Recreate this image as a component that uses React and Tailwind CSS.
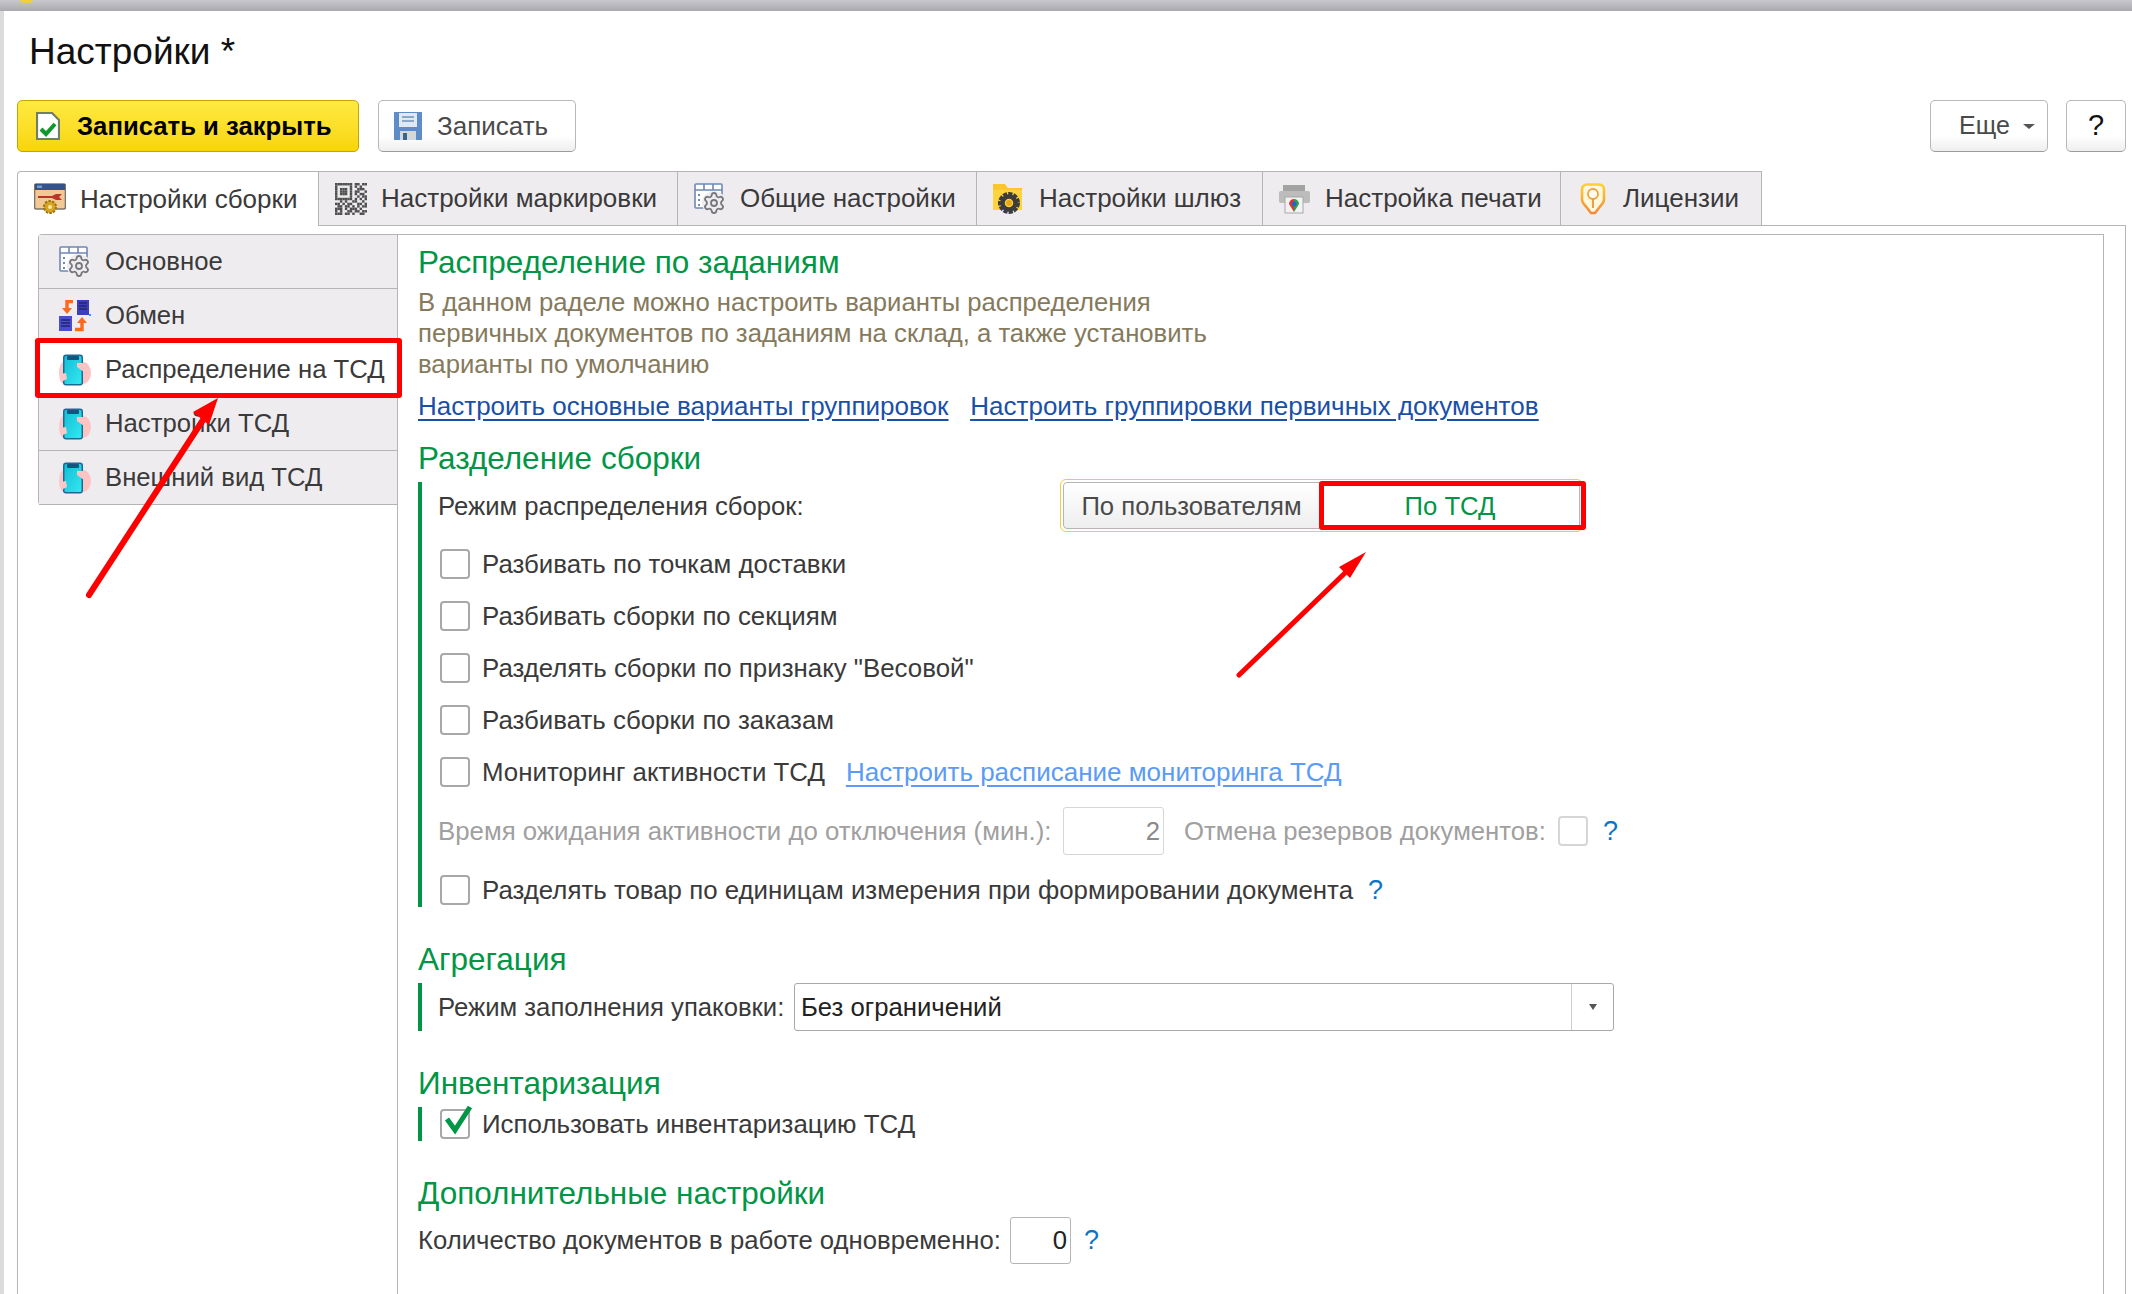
import React from 'react';
import { Settings } from 'lucide-react';

const tabs = [
  { label: 'Настройки сборки', w: 'w-[302px]', icon: 'assembly', active: true },
  { label: 'Настройки маркировки', w: 'w-[359px]', icon: 'qr' },
  { label: 'Общие настройки', w: 'w-[299px]', icon: 'common' },
  { label: 'Настройки шлюз', w: 'w-[286px]', icon: 'folder' },
  { label: 'Настройка печати', w: 'w-[298px]', icon: 'printer' },
  { label: 'Лицензии', w: 'w-[201px]', icon: 'license' },
];

const sideItems = [
  { label: 'Основное', icon: 'common' },
  { label: 'Обмен', icon: 'exchange' },
  { label: 'Распределение на ТСД', icon: 'phone', active: true },
  { label: 'Настройки ТСД', icon: 'phone' },
  { label: 'Внешний вид ТСД', icon: 'phone' },
];

const qrCells = [
  '1111111011011',
  '1000001010100',
  '1011101001110',
  '1011101011001',
  '1011101010110',
  '1000001001011',
  '1111111010101',
  '0010100110010',
  '1101011001101',
  '0110110101011',
  '1110101110100',
  '1010011011011',
  '1110110100110',
];

const TabIcon = ({ name }) => {
  if (name === 'assembly') {
    return (
      <svg width="32" height="32" viewBox="0 0 32 32" className="shrink-0">
        <rect x="0.5" y="1" width="31" height="25" rx="2" fill="#f2c995" stroke="#7f7468" strokeWidth="1.6" />
        <rect x="1" y="1" width="30" height="6" fill="#31548f" />
        <rect x="3" y="2.5" width="5" height="2.5" fill="#6f9fd4" />
        <path d="M4 13h14l4-2h6l-3 3 3 3h-6l-4-2H4z" fill="#b9342a" />
        <circle cx="16" cy="24" r="6" fill="#d8a520" stroke="#9a7512" strokeWidth="2" strokeDasharray="2.5 1.2" />
        <circle cx="16" cy="24" r="2" fill="#f7e6b0" />
      </svg>
    );
  }
  if (name === 'qr') {
    return (
      <svg width="32" height="32" viewBox="0 0 32 32" className="shrink-0">
        {qrCells.map((row, y) =>
          row.split('').map((c, x) =>
            c === '1' ? <rect key={x + '-' + y} x={x * 2.46} y={y * 2.46} width="2.46" height="2.46" fill="#4f4f4f" /> : null
          )
        )}
      </svg>
    );
  }
  if (name === 'common') {
    return (
      <svg width="32" height="32" viewBox="0 0 32 32" className="shrink-0">
        <rect x="1" y="1" width="27" height="24" rx="1" fill="#fff" stroke="#7088b4" strokeWidth="1.6" />
        <path d="M1 7h27M10 1v6M19 1v6" stroke="#7088b4" strokeWidth="1.6" />
        <path d="M5 11v2M5 16v2M5 21v2" stroke="#7088b4" strokeWidth="2" />
        <circle cx="20" cy="20" r="12" fill="#efecf0" />
        <Settings x="8" y="8" width="24" height="24" color="#75777c" strokeWidth="1.8" />
      </svg>
    );
  }
  if (name === 'folder') {
    return (
      <svg width="32" height="32" viewBox="0 0 32 32" className="shrink-0">
        <path d="M0 1h12l3 4h14v22H0z" fill="#fbc62b" />
        <path d="M0 7h29v20H0z" fill="#fdd33e" />
        <circle cx="16" cy="20" r="8" fill="none" stroke="#3c3c3c" strokeWidth="6" strokeDasharray="3.6 1" />
        <circle cx="16" cy="20" r="6.5" fill="none" stroke="#3c3c3c" strokeWidth="4.5" />
        <circle cx="16" cy="20" r="3" fill="#e9a81a" />
      </svg>
    );
  }
  if (name === 'printer') {
    return (
      <svg width="32" height="32" viewBox="0 0 32 32" className="shrink-0">
        <rect x="4" y="2" width="22" height="7" fill="#a3a3a3" />
        <rect x="0" y="8" width="31" height="12" rx="2" fill="#bcbcbc" />
        <rect x="6" y="14" width="18" height="16" fill="#f2f2f2" stroke="#a8a8a8" />
        <path d="M15 16a5 5 0 0 1 5 5l-5 8z" fill="#2e9d4c" />
        <path d="M15 16a5 5 0 0 0-5 5l5 8z" fill="#d8382f" />
        <circle cx="15" cy="21" r="2.4" fill="#2a62c9" />
      </svg>
    );
  }
  if (name === 'license') {
    return (
      <svg width="32" height="32" viewBox="0 0 32 32" className="shrink-0">
        <defs>
          <linearGradient id="lic" x1="0" y1="0" x2="0" y2="1">
            <stop offset="0" stopColor="#fcd22e" />
            <stop offset="1" stopColor="#f58a3c" />
          </linearGradient>
        </defs>
        <path d="M10 1.5h12c3 0 5 2 5 5v10c0 3-2 5-4 7l-5 6.5h-4l-5-6.5c-2-2-4-4-4-7v-10c0-3 2-5 5-5z" fill="#fff8dc" stroke="url(#lic)" strokeWidth="2.6" />
        <circle cx="16" cy="11" r="5" fill="#fffdf2" stroke="#eda33a" strokeWidth="1.8" />
        <path d="M16 16v9" stroke="#ed9333" strokeWidth="1.8" />
      </svg>
    );
  }
  if (name === 'exchange') {
    return (
      <svg width="32" height="32" viewBox="0 0 32 32" className="shrink-0">
        <rect x="18" y="0" width="12" height="15" fill="#3d3fb8" />
        <rect x="0" y="16" width="13" height="15" fill="#4a4cd0" />
        <path d="M20 3h8M20 6h8M20 9h8M2 20h9M2 23h9M2 26h9" stroke="#23246e" strokeWidth="1.4" />
        <path d="M30 14h2v2h-2z" fill="#2b9df2" />
        <path d="M14 1.5H8v9" fill="none" stroke="#fb6a1c" strokeWidth="3.4" />
        <path d="M3 8h10l-5 6z" fill="#fb6a1c" />
        <path d="M16 29.5h7v-9" fill="none" stroke="#fb6a1c" strokeWidth="3.4" />
        <path d="M18 23h10l-5-6z" fill="#fb6a1c" />
      </svg>
    );
  }
  return (
    <svg width="32" height="32" viewBox="0 0 32 32" className="shrink-0">
      <defs>
        <linearGradient id="screen" x1="0" y1="0" x2="1" y2="1">
          <stop offset="0" stopColor="#12bed6" />
          <stop offset="1" stopColor="#34e8f0" />
        </linearGradient>
      </defs>
      <ellipse cx="4.5" cy="19" rx="4.5" ry="11" fill="#fbc8c8" />
      <ellipse cx="24" cy="19" rx="8" ry="11" fill="#fdc4c4" />
      <rect x="4" y="0.5" width="20" height="31" rx="3" fill="#1b6a96" />
      <rect x="5.5" y="2" width="17" height="28" rx="1.5" fill="url(#screen)" />
      <rect x="8" y="2" width="12" height="4" rx="1" fill="#14557f" />
      <path d="M18 9l9 0 4 7-6 2-7-5z" fill="#fdc4c4" />
      <path d="M1 20l6-1 1 6-4 2z" fill="#fbc8c8" />
    </svg>
  );
};

const Checkbox = ({ checked, disabled }) => (
  <span className={`relative block w-[30px] h-[30px] shrink-0 rounded-[4px] border-2 bg-white ${disabled ? 'border-[#d6d6d6]' : 'border-[#a8a8a8]'}`}>
    {checked && (
      <svg width="32" height="38" viewBox="0 0 32 38" className="absolute left-[-1px] top-[-10px]">
        <path d="M6 18l8 11L29 6" fill="none" stroke="#009646" strokeWidth="5" />
      </svg>
    )}
  </span>
);

const Hint = ({ className }) => <span className={`text-[27px] text-[#0b74c4] ${className || ''}`}>?</span>;

const SectionTitle = ({ children, className }) => (
  <h2 className={`h-[40px] leading-[38px] text-[31.5px] font-normal text-[#009646] ${className || ''}`}>{children}</h2>
);

const CheckRow = ({ children }) => (
  <label className="flex items-center h-[52px] ml-[2px] gap-[12px] text-[25.85px]">
    <Checkbox />
    <span>{children}</span>
  </label>
);

const btnGray = 'h-[52px] rounded-[5px] border border-[#b8b8b8] border-b-[#9c9c9c] bg-gradient-to-b from-white via-white via-70% to-[#eeeeee] flex items-center text-[#4a4a4a]';

export default function App() {
  return (
    <div className="relative w-[2132px] h-[1294px] overflow-hidden bg-white flex flex-col text-[25.7px] text-[#3a3a3a] font-['Liberation_Sans',sans-serif]">
      {/* окно сверху */}
      <div className="relative h-[11px] shrink-0 bg-gradient-to-b from-[#c8c8cc] to-[#a9a9b0]">
        <div className="absolute left-[20px] top-[-6px] w-[13px] h-[9px] rounded-full bg-[#f3cf3a]" />
      </div>

      <div className="flex-1 flex flex-col min-h-0 border-l-[4px] border-[#dcdcdc]">
        {/* Заголовок */}
        <div className="h-[89px] shrink-0 pl-[25px] pt-[17px] text-[37px] leading-[48px] text-[#111]">Настройки *</div>

        {/* Панель кнопок */}
        <div className="h-[52px] shrink-0 flex items-center ml-[13px] mr-[6px]">
          <button className="h-[52px] w-[342px] flex items-center pl-[18px] gap-[17px] rounded-[5px] border border-[#c9a400] bg-gradient-to-b from-[#ffea3f] to-[#f8d500] font-bold text-black">
            <svg width="24" height="28" viewBox="0 0 24 28" className="shrink-0">
              <path d="M1 1h15l7 7v19H1z" fill="#fff" stroke="#6f7f66" strokeWidth="2.2" />
              <path d="M5 17l5 5 9-10" fill="none" stroke="#0e9a2a" strokeWidth="4" />
            </svg>
            Записать и закрыть
          </button>
          <button className={`${btnGray} w-[198px] ml-[19px] pl-[15px] gap-[15px] text-[26px]`}>
            <svg width="28" height="28" viewBox="0 0 28 28" className="shrink-0">
              <path d="M0 0h28v28H0z" fill="#5d8cc6" />
              <rect x="5" y="1" width="18" height="14" fill="#dfe8f3" />
              <path d="M8 5h12M8 9h12" stroke="#8aa8cf" strokeWidth="2" />
              <rect x="6" y="19" width="16" height="9" fill="#d2d8de" />
              <rect x="9" y="21" width="4" height="7" fill="#3c628f" />
            </svg>
            Записать
          </button>
          <button className={`${btnGray} w-[118px] ml-auto pl-[28px] text-[25px]`}>
            Еще
            <span className="ml-[13px] w-0 h-0 border-x-[6px] border-x-transparent border-t-[5px] border-t-[#555]" />
          </button>
          <button className={`${btnGray} w-[60px] ml-[18px] justify-center !text-[#111] text-[29px]`}>?</button>
        </div>

        {/* Вкладки */}
        <div className="flex shrink-0 h-[55px] mt-[19px] ml-[13px] -mb-px relative z-10 text-[26px]">
          {tabs.map((t) => (
            <div
              key={t.label}
              className={`${t.w} flex items-center pl-[16px] gap-[14px] border-t border-r border-[#b5b5b5] ${t.active ? 'bg-white border-l rounded-tl-[4px]' : 'bg-[#efecf0] border-b'}`}
            >
              <TabIcon name={t.icon} />
              <span className="whitespace-nowrap">{t.label}</span>
            </div>
          ))}
        </div>

        {/* Тело формы */}
        <div className="flex-1 min-h-0 flex ml-[13px] mr-[6px] pt-[8px] pl-[20px] pr-[21px] border border-b-0 border-[#b5b5b5]">
          <div className="w-[359px] shrink-0">
            <div className="rounded-l-[4px] border-l border-t border-[#b5b5b5]">
              {sideItems.map((s) => (
                <div
                  key={s.label}
                  className={`h-[54px] flex items-center pl-[20px] gap-[14px] border-b border-[#b5b5b5] ${s.active ? 'bg-white' : 'bg-[#efecf0]'}`}
                >
                  <TabIcon name={s.icon} />
                  <span className="whitespace-nowrap">{s.label}</span>
                </div>
              ))}
            </div>
          </div>

          <div className="flex-1 min-w-0 pl-[20px] pt-[8px] border-l border-t border-r border-[#b5b5b5]">
            <SectionTitle>Распределение по заданиям</SectionTitle>
            <p className="mt-[4px] w-[860px] leading-[31px] text-[#857a5c]">
              В данном раделе можно настроить варианты распределения первичных документов по заданиям на склад, а также установить варианты по умолчанию
            </p>
            <div className="mt-[11px] flex gap-[22px] h-[30px] leading-[30px] text-[26px] text-[#1a50a8] underline underline-offset-[4px]">
              <a>Настроить основные варианты группировок</a>
              <a>Настроить группировки первичных документов</a>
            </div>

            <SectionTitle className="mt-[18px]">Разделение сборки</SectionTitle>
            <div className="mt-[3px] border-l-[4px] border-[#009646] pl-[16px] pb-[2px]">
              <div className="flex items-center h-[47px]">
                <span className="w-[625px] pt-[2px]">Режим распределения сборок:</span>
                <div className="relative flex h-[47px] outline-1 outline-offset-2 outline-[#f5cb3a] rounded-[3px]">
                  <div className="w-[257px] pt-[2px] flex items-center justify-center rounded-l-[4px] border border-[#b5b5b5] bg-gradient-to-b from-white to-[#eeeeee] text-[#4a4a4a]">По пользователям</div>
                  <div className="w-[260px] pt-[2px] flex items-center justify-center border border-[#b5b5b5] bg-white text-[#009646]">По ТСД</div>
                  <div className="absolute left-[256px] right-[-6px] top-[-1px] bottom-[-1px] rounded-[3px] border-[5px] border-[#ff0000]" />
                </div>
              </div>
              <div className="mt-[9px]">
                <CheckRow>Разбивать по точкам доставки</CheckRow>
                <CheckRow>Разбивать сборки по секциям</CheckRow>
                <CheckRow>Разделять сборки по признаку "Весовой"</CheckRow>
                <CheckRow>Разбивать сборки по заказам</CheckRow>
                <label className="flex items-center h-[52px] ml-[2px] gap-[12px] text-[25.85px]">
                  <Checkbox />
                  <span>Мониторинг активности ТСД</span>
                  <a className="ml-[9px] text-[26px] text-[#5b9bf5] underline underline-offset-[4px]">Настроить расписание мониторинга ТСД</a>
                </label>
              </div>
              <div className="mt-[9px] flex items-center h-[48px] text-[#a0a0a0]">
                <span className="w-[625px] text-[25.8px]">Время ожидания активности до отключения (мин.):</span>
                <div className="w-[101px] h-[48px] flex items-center justify-end pr-[3px] rounded-[3px] border border-[#d6d6d6] text-[#8a8a8a]">2</div>
                <span className="ml-[20px] w-[374px] whitespace-nowrap">Отмена резервов документов:</span>
                <Checkbox disabled />
                <Hint className="ml-[15px]" />
              </div>
              <label className="mt-[20px] flex items-center h-[30px] ml-[2px] gap-[12px] text-[25.85px]">
                <Checkbox />
                <span>Разделять товар по единицам измерения при формировании документа</span>
                <Hint className="ml-[3px]" />
              </label>
            </div>

            <SectionTitle className="mt-[33px]">Агрегация</SectionTitle>
            <div className="mt-[3px] h-[48px] border-l-[4px] border-[#009646] pl-[16px] flex items-center">
              <span className="w-[356px]">Режим заполнения упаковки:</span>
              <div className="w-[820px] h-[48px] flex items-center rounded-[3px] border border-[#a8a8a8] pl-[6px] text-[#222]">
                <span className="flex-1">Без ограничений</span>
                <span className="w-[42px] h-full flex items-center justify-center border-l border-[#cfcfcf]">
                  <span className="w-0 h-0 border-x-[4px] border-x-transparent border-t-[6px] border-t-[#555]" />
                </span>
              </div>
            </div>

            <SectionTitle className="mt-[33px]">Инвентаризация</SectionTitle>
            <div className="mt-[3px] h-[34px] border-l-[4px] border-[#009646] pl-[16px] flex items-center">
              <label className="flex items-center ml-[2px] gap-[12px] text-[25.9px]">
                <Checkbox checked />
                <span>Использовать инвентаризацию ТСД</span>
              </label>
            </div>

            <SectionTitle className="mt-[33px]">Дополнительные настройки</SectionTitle>
            <div className="mt-[3px] flex items-center h-[47px]">
              <span className="w-[592px]">Количество документов в работе одновременно:</span>
              <div className="w-[61px] h-[47px] flex items-center justify-end pr-[3px] rounded-[3px] border border-[#b5b5b5] text-[#222]">0</div>
              <Hint className="ml-[13px]" />
            </div>
          </div>
        </div>
      </div>

      {/* Пометки поверх скриншота */}
      <div className="absolute left-[35px] top-[338px] w-[367px] h-[60px] rounded-[3px] border-[5px] border-[#ff0000]" />
      <svg width="2132" height="1294" viewBox="0 0 2132 1294" className="absolute left-0 top-0 pointer-events-none">
        <line x1="89" y1="595" x2="203" y2="420" stroke="#ff0000" strokeWidth="6" strokeLinecap="round" />
        <polygon points="218,398 193,412 209,425" fill="#ff0000" />
        <line x1="1239" y1="675" x2="1346" y2="572" stroke="#ff0000" strokeWidth="5" strokeLinecap="round" />
        <polygon points="1366,552 1339,567 1350,578" fill="#ff0000" />
      </svg>
    </div>
  );
}
